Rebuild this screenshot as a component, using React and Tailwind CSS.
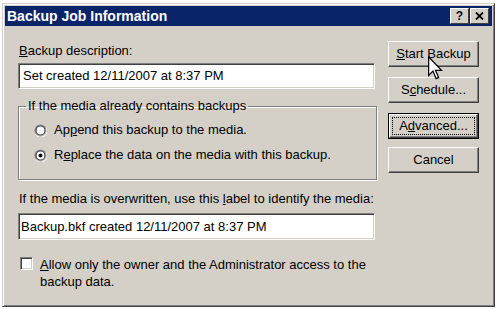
import React from 'react';

function Btn({ children, isDefault, className = '' }) {
  if (isDefault) {
    return (
      <div className={"w-[91px] h-[26px] border border-black " + className}>
        <div className="h-full w-full border border-t-white border-l-white border-r-[#404040] border-b-[#404040] shadow-[inset_-1px_-1px_0_#808080] flex items-center justify-center p-[2px]">
          <div className="h-full w-full border border-dotted border-black flex items-center justify-center">
            {children}
          </div>
        </div>
      </div>
    );
  }
  return (
    <div className={"w-[91px] h-[26px] border border-t-white border-l-white border-r-[#404040] border-b-[#404040] shadow-[inset_-1px_-1px_0_#808080] flex items-center justify-center " + className}>
      {children}
    </div>
  );
}

function Radio({ checked }) {
  return (
    <svg width="13" height="13" viewBox="0 0 12 12" className="shrink-0">
      <circle cx="6" cy="6" r="5.5" fill="#808080" />
      <path d="M1.2 9 A5.2 5.2 0 0 0 10.8 3 L11.5 3.5 A5.5 5.5 0 0 1 1 9.5 Z" fill="#ffffff" />
      <circle cx="6" cy="6" r="4.5" fill="#404040" />
      <path d="M2 8.8 A4.5 4.5 0 0 0 10 3.2 L10.5 3.5 A4.6 4.6 0 0 1 2 9.2 Z" fill="#d4d0c8" />
      <circle cx="6" cy="6" r="3.6" fill="#ffffff" />
      {checked && <circle cx="6" cy="6" r="1.8" fill="#000000" />}
    </svg>
  );
}

export default function App() {
  return (
    <div className="w-[497px] h-[309px] bg-white overflow-hidden relative text-black text-[13px] leading-[16px]" style={{ fontFamily: '"Liberation Sans", Arial, sans-serif' }}>
      <div className="mt-[3px] ml-[2px] w-[493px] h-[304px] bg-[#d4d0c8] border border-t-[#d4d0c8] border-l-[#d4d0c8] border-r-[#404040] border-b-[#404040] shadow-[inset_1px_1px_0_#fff,inset_-1px_-1px_0_#808080] p-[2px] flex flex-col">
        {/* title bar */}
        <div className="h-[20px] bg-[#0a246a] flex items-center justify-between pl-[2px] pr-[3px]">
          <span className="text-white font-bold text-[14px] leading-[16px]">Backup Job Information</span>
          <div className="flex gap-[1px]">
            <div className="w-[19px] h-[16px] bg-[#d4d0c8] border border-t-white border-l-white border-r-[#404040] border-b-[#404040] flex items-center justify-center text-[12px] font-bold leading-none">?</div>
            <div className="w-[19px] h-[16px] bg-[#d4d0c8] border border-t-white border-l-white border-r-[#404040] border-b-[#404040] flex items-center justify-center">
              <svg width="9" height="8" viewBox="0 0 9 8">
                <path d="M1 0.5 L8 7.5 M8 0.5 L1 7.5" stroke="#000" strokeWidth="1.8" />
              </svg>
            </div>
          </div>
        </div>

        {/* body */}
        <div className="flex">
          <div className="pl-[13px] pt-[17px] w-[373px] flex flex-col">
            <div className="pl-[1px]"><u>B</u>ackup description:</div>
            <div className="mt-[4px] w-[357px] h-[26px] bg-white border border-t-[#808080] border-l-[#808080] border-r-white border-b-white shadow-[inset_1px_1px_0_#404040,inset_-1px_-1px_0_#d4d0c8] flex items-center pl-[4px]">
              Set created 12/11/2007 at 8:37 PM
            </div>

            <fieldset className="mt-[9px] w-[359px] border border-[#808080] shadow-[1px_1px_0_#fff,inset_1px_1px_0_#fff] pl-[15px] pb-[15px]">
              <legend className="-ml-[8px] px-[2px]">If the media already contains backups</legend>
              <div className="mt-[7px] h-[18px] flex items-center gap-[7px]">
                <Radio />
                <span>Ap<u>p</u>end this backup to the media.</span>
              </div>
              <div className="mt-[7px] h-[18px] flex items-center gap-[7px]">
                <Radio checked />
                <span>R<u>e</u>place the data on the media with this backup.</span>
              </div>
            </fieldset>

            <div className="mt-[11px] pl-[1px]">If the media is overwritten, use this <u>l</u>abel to identify the media:</div>
            <div className="mt-[6px] w-[357px] h-[27px] bg-white border border-t-[#808080] border-l-[#808080] border-r-white border-b-white shadow-[inset_1px_1px_0_#404040,inset_-1px_-1px_0_#d4d0c8] flex items-center pl-[2px]">
              Backup.bkf created 12/11/2007 at 8:37 PM
            </div>

            <div className="mt-[16px] ml-[2px] flex items-start gap-[7px]">
              <div className="mt-[1px] w-[13px] h-[13px] shrink-0 bg-white border border-t-[#808080] border-l-[#808080] border-r-white border-b-white shadow-[inset_1px_1px_0_#404040,inset_-1px_-1px_0_#d4d0c8]" />
              <div className="leading-[17px]">
                <u>A</u>llow only the owner and the Administrator access to the<br />backup data.
              </div>
            </div>
          </div>

          <div className="pt-[15px] pl-[10px] flex flex-col">
            <Btn><span><u>S</u>tart Backup</span></Btn>
            <Btn className="mt-[10px]"><span>S<u>c</u>hedule...</span></Btn>
            <Btn className="mt-[10px]" isDefault><span>A<u>d</u>vanced...</span></Btn>
            <Btn className="mt-[8px]"><span>Cancel</span></Btn>
          </div>
        </div>
      </div>

      {/* mouse pointer */}
      <svg className="absolute left-[428px] top-[56px]" width="15" height="24" viewBox="0 0 12 19">
        <path d="M0.5 0.5 L0.5 15.5 L4 12 L6.5 18 L8.5 17.2 L6 11.3 L10.8 11.3 Z" fill="#fff" stroke="#000" strokeWidth="1" strokeLinejoin="miter" />
      </svg>
    </div>
  );
}
